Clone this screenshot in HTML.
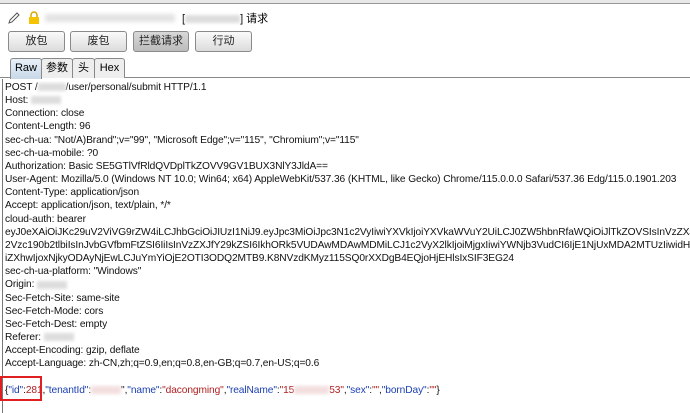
<!DOCTYPE html><html><head><meta charset="utf-8"><style>
body{margin:0;width:690px;height:413px;overflow:hidden;background:#fff;font-family:"Liberation Sans","Noto Sans CJK SC",sans-serif;position:relative}
.a{position:absolute}
.btn{position:absolute;top:31px;height:19px;border:1px solid #8a8a8a;border-radius:3px;background:linear-gradient(#fafafa,#dcdcdc);font-size:11px;text-align:center;line-height:19px;color:#222}
.tab{position:absolute;top:58px;height:19px;border:1px solid #888;border-bottom:none;background:#eee;font-size:11px;line-height:19px;text-align:center;border-radius:3px 3px 0 0}
.txt{position:absolute;left:5px;top:81px;width:685px;height:332px;overflow:hidden;font-size:10.2px;line-height:13.15px;color:#111;white-space:pre;letter-spacing:-0.1px}
.blur{display:inline-block;background:#ddd;filter:blur(1.5px);height:8px;vertical-align:middle}
</style></head><body>
<div class="a" style="left:0;top:0;width:690px;height:3px;background:#e8e8e8;border-bottom:1px solid #999"></div>
<svg class="a" style="left:7px;top:11px" width="14" height="14"><path d="M2 12 L3 9 L10 2 L12 4 L5 11 Z" fill="none" stroke="#555" stroke-width="1"/></svg>
<svg class="a" style="left:28px;top:11px" width="12" height="14"><path d="M3 6 V4 A3 3 0 0 1 9 4 V6" fill="none" stroke="#d9a800" stroke-width="1.5"/><rect x="1" y="6" width="10" height="7" fill="#f5c400"/></svg>
<div class="a" style="left:45px;top:14px;width:130px;height:8px;background:#e2e2e2;filter:blur(2px)"></div>
<div class="a" style="left:182px;top:10px;font-size:11px">[<span class="blur" style="width:55px"></span>] 请求</div>
<div class="btn" style="left:8px;width:55px">放包</div>
<div class="btn" style="left:70px;width:55px">废包</div>
<div class="btn" style="left:133px;width:54px;background:linear-gradient(#d8d8d8,#bcbcbc)">拦截请求</div>
<div class="btn" style="left:195px;width:55px">行动</div>
<div class="a" style="left:0;top:77px;width:690px;height:1px;background:#888"></div>
<div class="tab" style="left:10px;width:30px;background:linear-gradient(#e8f0f8,#c8d8e8);height:20px">Raw</div>
<div class="tab" style="left:41px;width:30px">参数</div>
<div class="tab" style="left:72px;width:21px">头</div>
<div class="tab" style="left:94px;width:29px">Hex</div>
<div class="a" style="left:2px;top:79px;width:1px;height:334px;background:#777"></div>
<div class="txt">POST /<span class="blur" style="width:28px"></span>/user/personal/submit HTTP/1.1
Host: <span class="blur" style="width:30px"></span>
Connection: close
Content-Length: 96
sec-ch-ua: "Not/A)Brand";v="99", "Microsoft Edge";v="115", "Chromium";v="115"
sec-ch-ua-mobile: ?0
Authorization: Basic SE5GTlVfRldQVDplTkZOVV9GV1BUX3NlY3JldA==
User-Agent: Mozilla/5.0 (Windows NT 10.0; Win64; x64) AppleWebKit/537.36 (KHTML, like Gecko) Chrome/115.0.0.0 Safari/537.36 Edg/115.0.1901.203
Content-Type: application/json
Accept: application/json, text/plain, */*
cloud-auth: bearer
eyJ0eXAiOiJKc29uV2ViVG9rZW4iLCJhbGciOiJIUzI1NiJ9.eyJpc3MiOiJpc3N1c2VyIiwiYXVkIjoiYXVkaWVuY2UiLCJ0ZW5hbnRfaWQiOiJlTkZOVSIsInVzZXJfbmFtZSI6
2Vzc190b2tlbiIsInJvbGVfbmFtZSI6IiIsInVzZXJfY29kZSI6IkhORk5VUDAwMDAwMDMiLCJ1c2VyX2lkIjoiMjgxIiwiYWNjb3VudCI6IjE1NjUxMDA2MTUzIiwidHlwZV9jb2
iZXhwIjoxNjkyODAyNjEwLCJuYmYiOjE2OTI3ODQ2MTB9.K8NVzdKMyz115SQ0rXXDgB4EQjoHjEHlsIxSIF3EG24
sec-ch-ua-platform: "Windows"
Origin: <span class="blur" style="width:30px"></span>
Sec-Fetch-Site: same-site
Sec-Fetch-Mode: cors
Sec-Fetch-Dest: empty
Referer: <span class="blur" style="width:30px"></span>
Accept-Encoding: gzip, deflate
Accept-Language: zh-CN,zh;q=0.9,en;q=0.8,en-GB;q=0.7,en-US;q=0.6

{<span style="color:#1a3fb0">"id"</span>:<span style="color:#b02020">281</span>,<span style="color:#1a3fb0">"tenantId"</span>:<span class="blur" style="width:30px;background:#f3dede"></span>",<span style="color:#1a3fb0">"name"</span>:<span style="color:#b02020">"dacongming"</span>,<span style="color:#1a3fb0">"realName"</span>:<span style="color:#b02020">"15<span class="blur" style="width:35px;background:#f3dede"></span>53"</span>,<span style="color:#1a3fb0">"sex"</span>:<span style="color:#b02020">""</span>,<span style="color:#1a3fb0">"bornDay"</span>:<span style="color:#b02020">""</span>}</div>
<div class="a" style="left:0;top:376px;width:42px;height:25px;border:2px solid #e02020;box-sizing:border-box"></div>
</body></html>
